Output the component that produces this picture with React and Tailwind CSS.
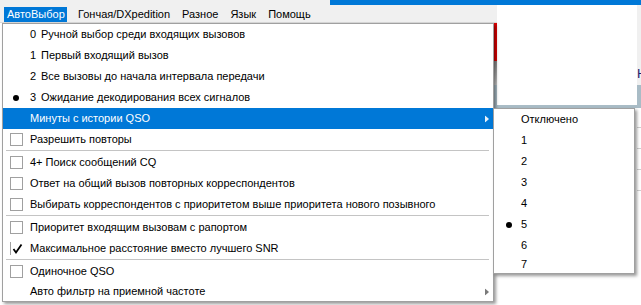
import React from "react";

const items = [
  { t: "radio", num: "0", text: "Ручной выбор среди входящих вызовов" },
  { t: "radio", num: "1", text: "Первый входящий вызов" },
  { t: "radio", num: "2", text: "Все вызовы до начала интервала передачи" },
  { t: "radio", num: "3", text: "Ожидание декодирования всех сигналов", on: true },
  { t: "sub", text: "Минуты с истории QSO", hl: true },
  { t: "check", text: "Разрешить повторы" },
  { t: "sep" },
  { t: "check", text: "4+ Поиск сообщений CQ" },
  { t: "check", text: "Ответ на общий вызов повторных корреспондентов" },
  { t: "check", text: "Выбирать корреспондентов с приоритетом выше приоритета нового позывного" },
  { t: "sep" },
  { t: "check", text: "Приоритет входящим вызовам с рапортом" },
  { t: "check", text: "Максимальное расстояние вместо лучшего SNR", on: true },
  { t: "sep" },
  { t: "check", text: "Одиночное QSO" },
  { t: "sub", text: "Авто фильтр на приемной частоте", last: true },
];

const subItems = ["Отключено", "1", "2", "3", "4", "5", "6", "7"];

function Arrow({ color }) {
  return (
    <svg width="4" height="7" viewBox="0 0 4 7" className="absolute right-[4px] top-1/2 -translate-y-1/2">
      <path d="M0 0 L4 3.5 L0 7 Z" fill={color} />
    </svg>
  );
}

function Check() {
  return (
    <div className="relative w-[13px] h-[13px] border-l border-[#a0a0a0]">
      <svg width="12" height="12" viewBox="0 0 12 12" className="absolute left-[1px] top-[1px]">
        <path d="M1.5 6 L4 9.5 L9.5 1.5" stroke="#000" strokeWidth="1.8" fill="none" />
      </svg>
    </div>
  );
}

function MenuRow({ it }) {
  if (it.t === "sep") {
    return (
      <div className="h-[2px] pl-[3px] pr-[4px]">
        <div className="h-px bg-[#c4c4c4]" />
      </div>
    );
  }
  const h = it.last ? "h-[19px]" : "h-[21px]";
  return (
    <div
      className={`relative flex items-center ${h} ${it.hl ? "bg-[#0078d7] text-white" : "text-black"}`}
    >
      <div className="w-[27px] h-full flex items-center shrink-0">
        {it.t === "check" &&
          (it.on ? (
            <div className="ml-[7px]">
              <Check />
            </div>
          ) : (
            <div className="ml-[7px] w-[13px] h-[13px] border border-[#a0a0a0] bg-white" />
          ))}
        {it.t === "radio" && it.on && <div className="ml-[10px] w-[6px] h-[6px] rounded-full bg-black" />}
      </div>
      {it.t === "radio" ? (
        <>
          <span className="w-[11px] shrink-0">{it.num}</span>
          <span className="whitespace-nowrap">{it.text}</span>
        </>
      ) : (
        <span className="whitespace-nowrap">{it.text}</span>
      )}
      {it.t === "sub" && <Arrow color={it.hl ? "#e8f1fa" : "#7a7a7a"} />}
    </div>
  );
}

export default function App() {
  return (
    <div className="relative w-[641px] h-[305px] overflow-hidden bg-white font-['Liberation_Sans',sans-serif] text-[11px] leading-none">
      {/* window title strip */}
      <div className="h-[5px] flex">
        <div className="w-[330px] bg-[#f0f0f0]" />
        <div className="flex-1 bg-[#0078d7]" />
      </div>
      {/* menu bar */}
      <div className="h-[18px] bg-[#f0f0f0] border-b border-[#dadada] flex items-start text-black">
        <div className="ml-[4px] mt-[2px] h-[15px] w-[63px] bg-[#0078d7] text-white flex items-center pl-[3px] whitespace-nowrap">
          АвтоВыбор
        </div>
        <div className="ml-[11px] mt-[2px] h-[15px] flex items-center whitespace-nowrap">Гончая/DXpedition</div>
        <div className="ml-[12px] mt-[2px] h-[15px] flex items-center">Разное</div>
        <div className="ml-[12px] mt-[2px] h-[15px] flex items-center">Язык</div>
        <div className="ml-[12px] mt-[2px] h-[15px] flex items-center">Помощь</div>
      </div>

      {/* background window fragments on the right */}
      <div className="absolute left-[493px] top-[23px] w-[4px] h-[85px] flex flex-col">
        <div className="h-[38px] bg-[#e00000]" />
        <div className="h-[24px] bg-gradient-to-b from-[#8a8a8a] to-[#c8c8c8]" />
        <div className="flex-1 bg-[#a9bcc6]" />
      </div>
      <div className="absolute left-[497px] top-[5px] w-[140px] h-[100px] bg-white" />
      <div className="absolute left-[493px] top-[105px] w-[148px] h-[3px] bg-[#a9bcc6]" />
      <div className="absolute left-[637px] top-[5px] w-[4px] h-[103px] flex flex-col">
        <div className="h-[80px] bg-[#f0f0f0] relative overflow-hidden">
          <span className="absolute left-0 top-[62px] text-[#1a1a6e] text-[13px]">H</span>
        </div>
        <div className="flex-1 bg-[#a9bcc6]" />
      </div>
      <div className="absolute left-[637px] top-[108px] w-[4px] h-[197px] flex flex-col">
        <div className="h-[20px] border-b border-[#d0d0d0]" />
        <div className="h-[21px] border-b border-[#d0d0d0]" />
        <div className="h-[21px] border-b border-[#d0d0d0]" />
        <div className="h-[21px] border-b border-[#d0d0d0]" />
      </div>

      {/* main dropdown */}
      <div className="absolute left-[2px] top-[23px] w-[492px] border border-[#a0a0a0] bg-white shadow-[2px_2px_3px_rgba(0,0,0,0.4)]">
        {items.map((it, i) => (
          <MenuRow key={i} it={it} />
        ))}
      </div>

      {/* submenu */}
      <div className="absolute left-[493px] top-[108px] w-[142px] border border-[#a0a0a0] bg-white shadow-[2px_2px_3px_rgba(0,0,0,0.4)]">
        {subItems.map((s, i) => (
          <div key={i} className={`relative flex items-center ${i === 7 ? "h-[17px]" : "h-[21px]"} text-black`}>
            <div className="w-[27px] shrink-0 flex items-center">
              {s === "5" && <div className="ml-[12px] w-[6px] h-[6px] rounded-full bg-black" />}
            </div>
            <span>{s}</span>
          </div>
        ))}
      </div>
    </div>
  );
}
